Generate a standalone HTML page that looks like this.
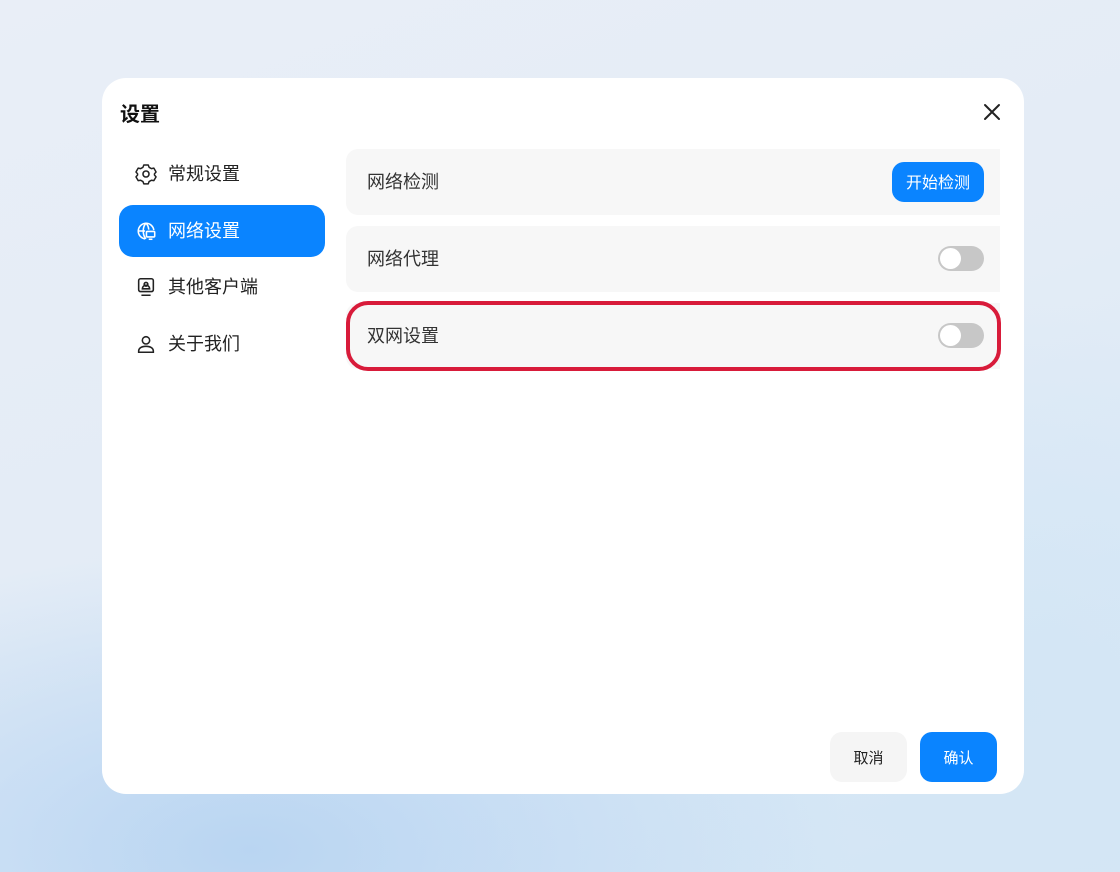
<!DOCTYPE html>
<html><head><meta charset="utf-8"><style>
*{margin:0;padding:0;box-sizing:border-box}
body{width:1120px;height:872px;overflow:hidden;font-family:"Liberation Sans","Noto Sans CJK SC",sans-serif;
background:radial-gradient(ellipse 600px 300px at 250px 850px,#b9d5f2,transparent),radial-gradient(ellipse 500px 400px at 1000px 700px,#d3e6f5,transparent),linear-gradient(160deg,#e9eef7 0%,#e3ecf6 50%,#d4e6f5 100%);position:relative}
.dlg{position:absolute;left:102px;top:78px;width:922px;height:716px;background:#fff;border-radius:24px}
.title{position:absolute;left:18px;top:20px;font-size:20px;font-weight:bold;color:#111}
.close{position:absolute;left:880px;top:24px}
.nav{position:absolute;left:17px;width:206px;height:52px;border-radius:14px;display:flex;align-items:center;padding-left:16px;padding-bottom:3px;font-size:18px;color:#222}
.nav svg{margin-right:11px;margin-top:2px}
.nav.act{background:#0a84ff;color:#fff}
.row{position:absolute;left:244px;width:654px;height:66px;background:#f7f7f7;border-radius:12px 0 0 12px;font-size:18px;color:#333;display:flex;align-items:center;padding-left:21px;padding-bottom:3px}
.tg{position:absolute;left:592px;top:20px;width:46px;height:25px;border-radius:13px;background:#c7c7c7}
.tg:after{content:"";position:absolute;left:2px;top:2px;width:21px;height:21px;border-radius:50%;background:#fff}
.btn{position:absolute;border-radius:12px;font-size:15px;display:flex;align-items:center;justify-content:center}
</style></head><body>
<div class="dlg">
<div class="title">设置</div>
<svg class="close" width="20" height="20" viewBox="0 0 20 20"><path d="M3 3L17 17M17 3L3 17" stroke="#222" stroke-width="2" stroke-linecap="round"/></svg>
<div class="nav" style="top:70px"><svg width="22" height="22" viewBox="0 0 24 24" fill="none" stroke="#222" stroke-width="1.7" stroke-linejoin="round"><path d="M9.5 2.8h5l1 2.6 2.6 1.5 2.8-.5 2.5 4.3-1.8 2.1v1.4l1.8 2.1-2.5 4.3-2.8-.5-2.6 1.5-1 2.6h-5l-1-2.6-2.6-1.5-2.8.5L.6 16.3l1.8-2.1v-1.4L.6 10.7 3.1 6.4l2.8.5 2.6-1.5z" transform="translate(0.5 -0.5) scale(0.96)"/><circle cx="12" cy="12" r="3.3"/></svg>常规设置</div>
<div class="nav act" style="top:127px"><svg width="22" height="22" viewBox="0 0 24 24" fill="none" stroke="#fff" stroke-width="1.7"><path d="M11 20.5A8.5 8.5 0 1 1 20.5 11"/><path d="M3 12h8M12 3.5c-2.5 2.5-3 5-3 8.5s.5 6 3 8.5M12 3.5c2 2 2.8 4.5 3 7"/><rect x="12.5" y="12.5" width="9" height="6" rx="1"/><path d="M15 21h4"/></svg>网络设置</div>
<div class="nav" style="top:183px"><svg width="22" height="22" viewBox="0 0 24 24" fill="none" stroke="#222" stroke-width="1.7"><rect x="4" y="3" width="16" height="14" rx="2"/><path d="M7 21h10M8 14c0-2.5 2-4 4-4s4 1.5 4 4z"/><circle cx="12" cy="9" r="2"/></svg>其他客户端</div>
<div class="nav" style="top:240px"><svg width="22" height="22" viewBox="0 0 24 24" fill="none" stroke="#222" stroke-width="1.7"><circle cx="12" cy="8" r="4"/><path d="M4 21v-1.5c0-2.5 2.5-5 8-5s8 2.5 8 5V21z"/></svg>关于我们</div>
<div class="row" style="top:71px">网络检测<div class="btn" style="left:546px;top:13px;width:92px;height:40px;background:#0a84ff;color:#fff;font-size:16px;padding-bottom:2px">开始检测</div></div>
<div class="row" style="top:148px">网络代理<div class="tg"></div></div>
<div class="row" style="top:225px">双网设置<div class="tg"></div></div>
<div style="position:absolute;left:244px;top:223px;width:655px;height:70px;border:4px solid #d81b3a;border-radius:22px"></div>
<div class="btn" style="left:728px;top:654px;width:77px;height:50px;background:#f5f5f5;color:#222">取消</div>
<div class="btn" style="left:818px;top:654px;width:77px;height:50px;background:#0a84ff;color:#fff">确认</div>
</div>
</body></html>
